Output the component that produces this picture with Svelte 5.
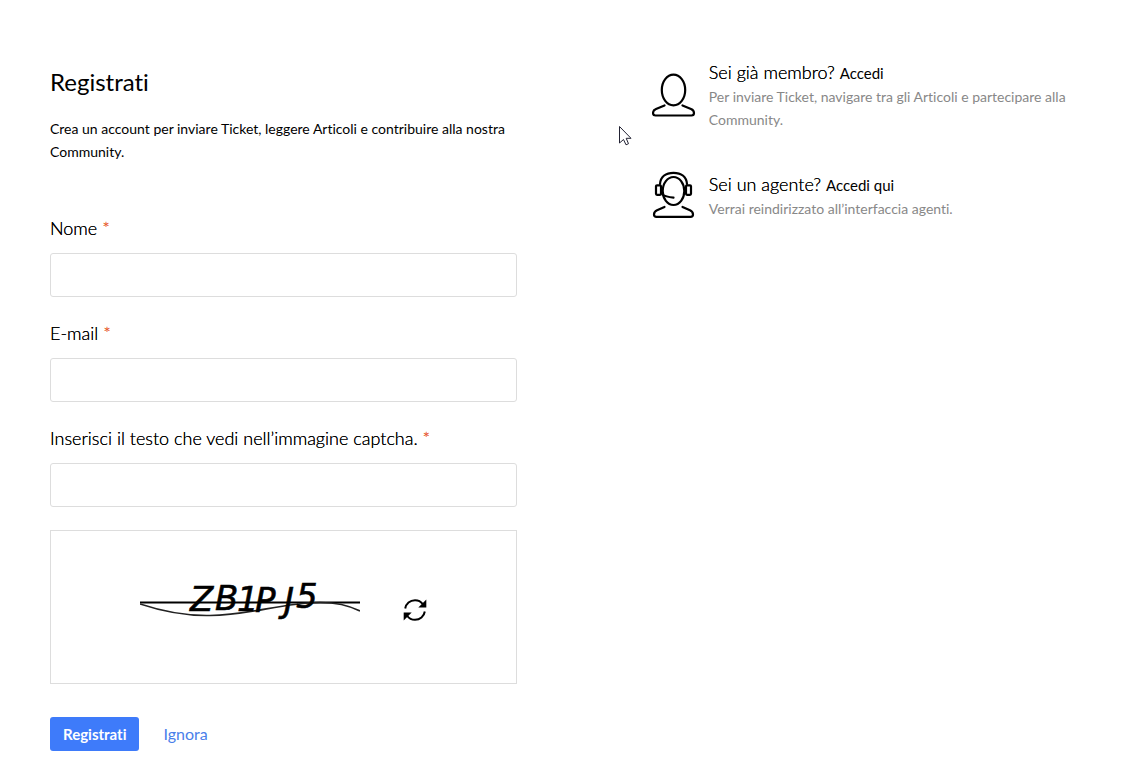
<script lang="ts">
	let name = $state('');
	let email = $state('');
	let captcha = $state('');

	function submit(e: Event) {
		e.preventDefault();
	}
</script>

<main class="page">
	<section class="register">
		<h1>Registrati</h1>
		<p class="intro">
			Crea un account per inviare Ticket, leggere Articoli e contribuire alla nostra Community.
		</p>

		<form onsubmit={submit}>
			<div class="field">
				<label for="name">Nome <span class="required">*</span></label>
				<input id="name" type="text" bind:value={name} />
			</div>
			<div class="field">
				<label for="email">E-mail <span class="required">*</span></label>
				<input id="email" type="text" bind:value={email} />
			</div>
			<div class="field">
				<label for="captcha">
					Inserisci il testo che vedi nell’immagine captcha. <span class="required">*</span>
				</label>
				<input id="captcha" type="text" bind:value={captcha} />
			</div>

			<div class="captcha-box">
				<svg class="captcha-image" viewBox="0 0 220 80" width="220" height="80">
					<path d="M0 32.5H220" stroke="#000" stroke-width="1.8" />
					<path
						d="M0 34C24 42 46 46 70 45.500C112 45 140 33 180 32.500C198 32.500 210 36 220 41"
						fill="none" stroke="#222" stroke-width="1.6"
					/>
					<text x="50 75 97 115 144 156" y="41 40 41 42 42 38">ZB1PJ5</text>
				</svg>
				<button type="button" class="refresh" aria-label="Aggiorna captcha">
					<svg viewBox="0 0 24 24" width="24" height="24">
						<path d="M2.200 10.500C3 5.500 7 2.200 12 2.200c3.200 0 6 1.400 7.700 3.800" />
						<path d="M21.800 13.500C21 18.500 17 21.800 12 21.800c-3.200 0-6-1.400-7.700-3.800" />
						<path class="solid" d="M23.300 1.500V9.500H15.300Z" />
						<path class="solid" d="M.7 22.500V14.500H8.700Z" />
					</svg>
				</button>
			</div>

			<div class="actions">
				<button type="submit" class="submit">Registrati</button>
				<a href="#home" class="skip">Ignora</a>
			</div>
		</form>
	</section>

	<aside class="options">
		<div class="option">
			<svg class="person" viewBox="0 0 44 52" width="44" height="52">
				<ellipse cx="21.500" cy="20" rx="11.700" ry="15.300" />
				<path d="M12.500 35.500L4 39C1.500 40 1 41.200 1 43C1 44.500 2 45.500 3.500 45.500H39.500C41 45.500 42 44.500 42 43C42 41.200 41.500 40 39 39L30.500 35.500" />
			</svg>
			<div class="option-text">
				<h2>Sei già membro? <a href="#login">Accedi</a></h2>
				<p>Per inviare Ticket, navigare tra gli Articoli e partecipare alla Community.</p>
			</div>
		</div>
		<div class="option">
			<svg class="person" viewBox="0 0 44 52" width="44" height="52">
				<ellipse cx="21.500" cy="21" rx="10.800" ry="14" />
				<path d="M8 14C8.500 6.500 14 2.800 21.500 2.800S34.500 6.500 35 14" />
				<rect x="4" y="15.300" width="5" height="9.500" rx="1" />
				<rect x="34" y="15.300" width="5" height="9.500" rx="1" />
				<path d="M10.500 24.500C13 26.500 17 27.200 21.500 27.700" />
				<path d="M12.500 37L5 40.300C2.500 41.500 2 42.700 2 44.500C2 46 3 46.800 4.500 46.800H38.500C40 46.800 41 46 41 44.500C41 42.700 40.500 41.500 38 40.300L30.500 37" />
			</svg>
			<div class="option-text">
				<h2>Sei un agente? <a href="#agent">Accedi qui</a></h2>
				<p>Verrai reindirizzato all’interfaccia agenti.</p>
			</div>
		</div>
	</aside>

	<svg class="pointer" viewBox="0 0 13 20" width="13" height="20" aria-hidden="true">
		<path d="M.5 .5V17L4.500 13.500L7 18.800L9.500 17.700L7.200 12.300H12Z" />
	</svg>
</main>

<style>
	:global(body) {
		margin: 0;
		background: #fff;
	}
	.page {
		position: relative;
		display: grid;
		grid-template-columns: 10fr 9fr;
		column-gap: 135px;
		align-items: start;
		padding: 60px 50px 28px;
		font-family: Lato, "Liberation Sans", sans-serif;
		font-variant-ligatures: none;
		color: #000;
	}
	h1 {
		margin: 0;
		font-size: 24px; font-weight: 400; line-height: 44px;
	}
	.intro {
		margin: 13px 0 52px;
		font-size: 14px; line-height: 23px;
	}
	.field { margin-bottom: 23px; }
	.field label {
		display: block;
		margin-bottom: 12px;
		font-size: 18px; font-weight: 300; line-height: 26px;
		text-shadow: 0 0 0 #000;
	}
	.required {
		color: #e8582c; line-height: 1;
		text-shadow: 0 0 0 #e8582c;
	}
	.field input {
		display: block;
		box-sizing: border-box;
		width: 100%; height: 44px; padding: 0 12px;
		border: 1px solid #ddd; border-radius: 3px;
		background: #fff; outline: none;
		font: inherit; font-size: 16px;
	}
	.captcha-box {
		display: flex; align-items: center; justify-content: center; gap: 43px;
		box-sizing: border-box;
		height: 154px; padding-top: 6px;
		border: 1px solid #ddd;
	}
	.captcha-image text {
		fill: #000; stroke: #000; stroke-width: 0.6;
		font-family: "DejaVu Sans", sans-serif;
		font-size: 34px; font-style: italic;
	}
	.refresh { padding: 0; border: 0; background: none; cursor: pointer; }
	.refresh svg { display: block; fill: none; stroke: #000; stroke-width: 2; }
	.refresh .solid { fill: #000; stroke: none; }
	.actions {
		display: flex; align-items: center; gap: 24px;
		margin-top: 33px;
	}
	.submit {
		height: 34px; padding: 0 13px;
		border: 0; border-radius: 3px;
		background: #3e7bfa; color: #fff;
		font-family: inherit; font-size: 15px; font-weight: 700;
		font-variant-ligatures: none;
		cursor: pointer;
	}
	.skip { color: #4a80ea; font-size: 16px; line-height: 18px; text-decoration: none; }
	.option { display: flex; align-items: center; gap: 13px; margin-bottom: 39px; }
	.person {
		flex-shrink: 0;
		fill: none; stroke: #000; stroke-width: 2.2;
		stroke-linecap: round; stroke-linejoin: round;
	}
	h2 {
		margin: 0;
		font-size: 18px; font-weight: 300; line-height: 24px;
		text-shadow: 0 0 0 #000;
	}
	h2 a {
		color: #000; font-size: 15px; font-weight: 400;
		text-decoration: none; text-shadow: none;
	}
	.option p {
		margin: 0;
		color: #888; font-size: 14px; line-height: 23px;
	}
	.pointer {
		position: absolute; left: 619px; top: 126px;
		fill: #fff; stroke: #223; stroke-width: 1;
		pointer-events: none;
	}
</style>
